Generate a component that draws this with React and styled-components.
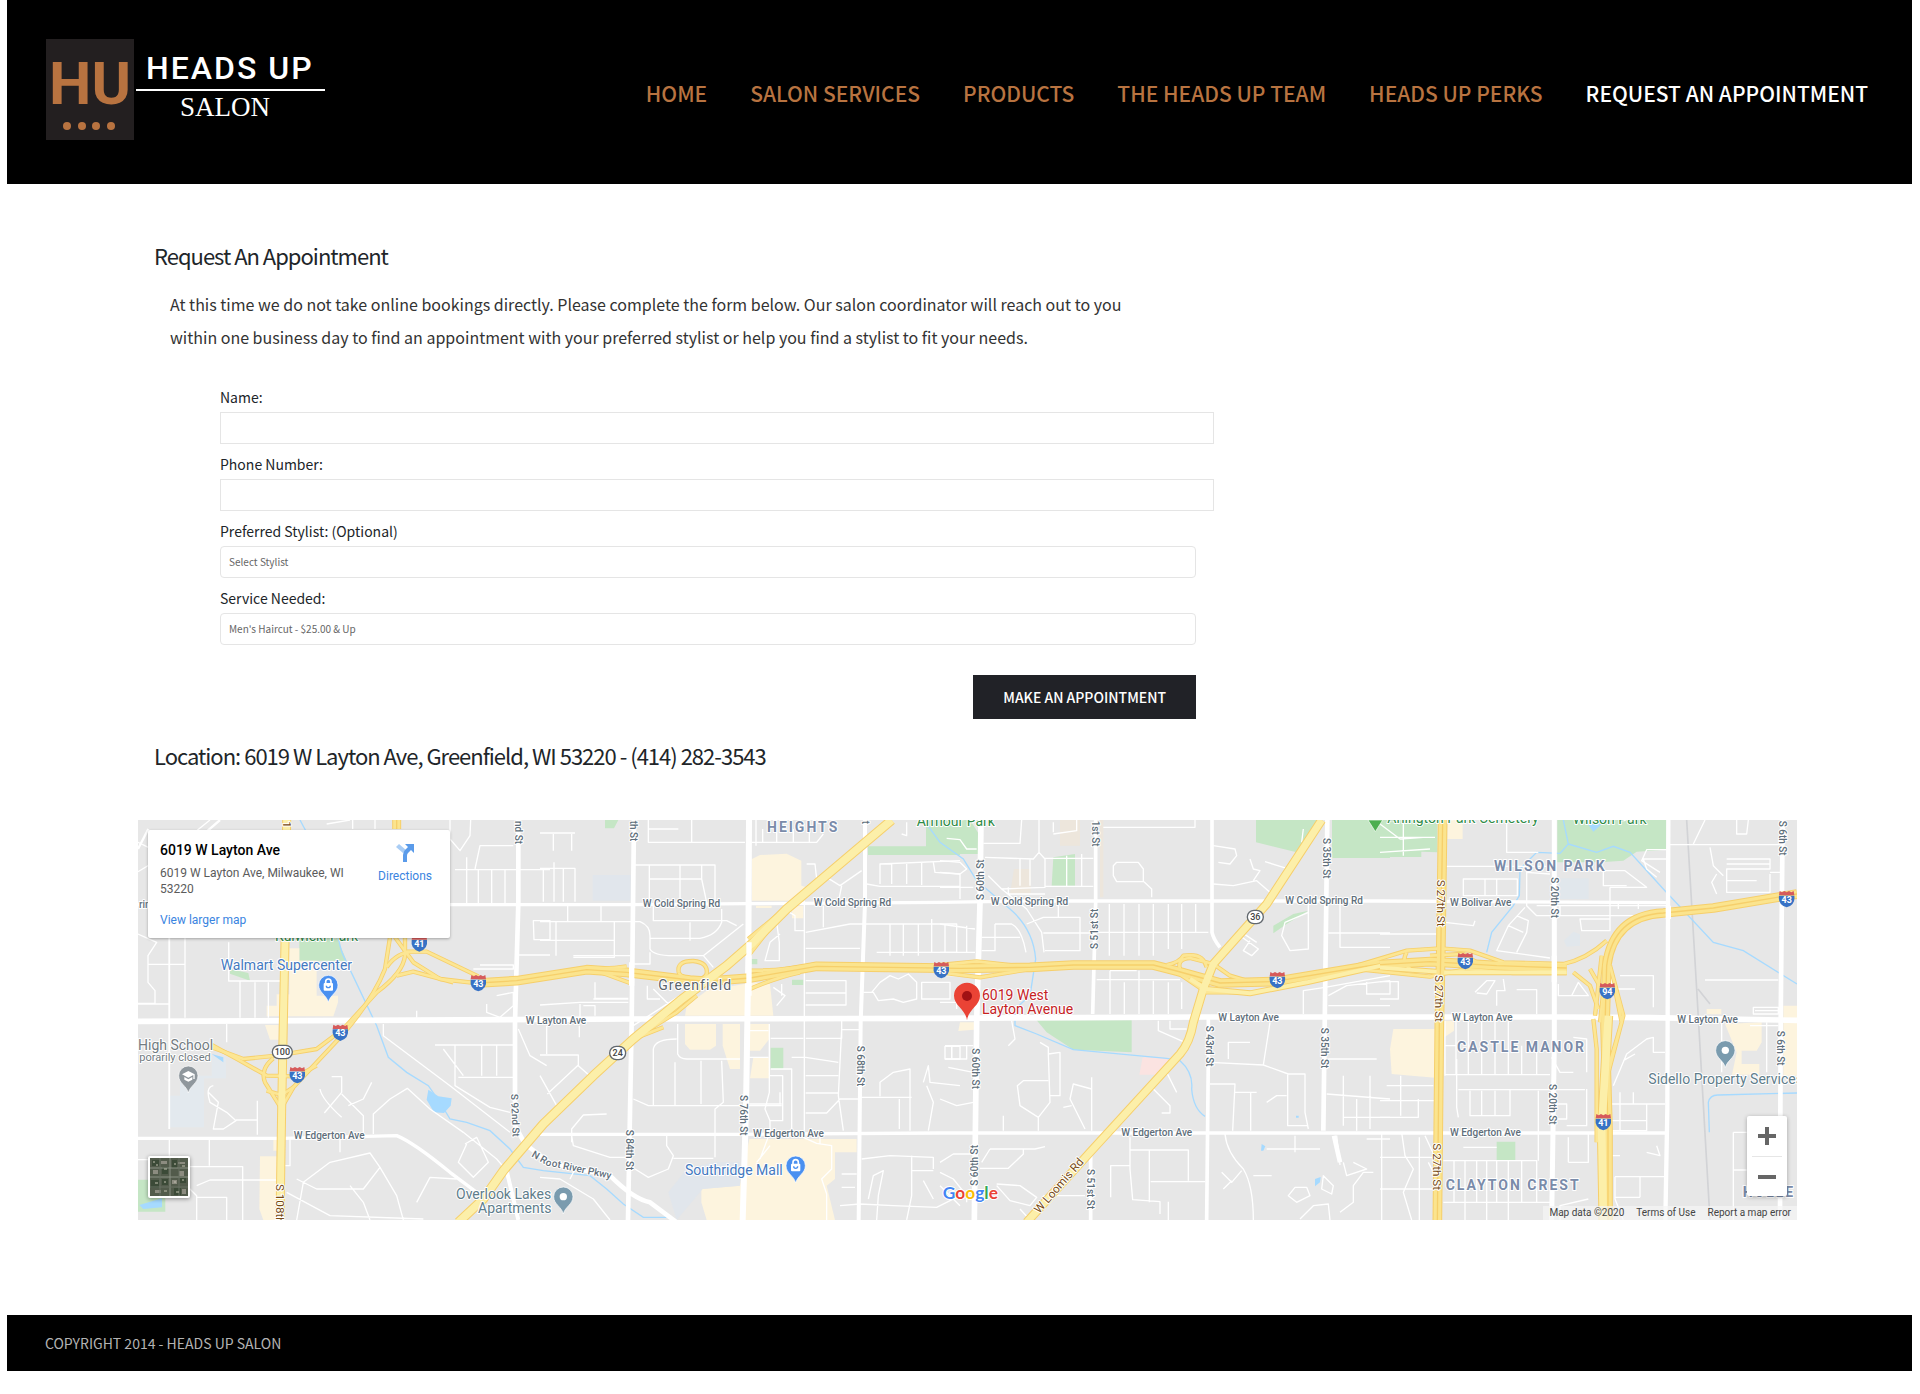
import React from 'react';
import styled, { createGlobalStyle } from 'styled-components';

const GlobalStyle = createGlobalStyle`
  * {
    box-sizing: border-box;
  }

  body {
    margin: 0;
    background: #fff;
    color: #212529;
    font-family: 'Noto Sans CJK SC', 'Noto Sans', sans-serif;
  }
`;

const Page = styled.div`
  padding: 0 8px 22px 7px;
`;

const HeaderBar = styled.header`
  display: flex;
  align-items: flex-start;
  justify-content: space-between;
  min-height: 184px;
  padding: 38px 44px 0 39px;
  background: #000;
`;

const LogoLink = styled.a`
  display: block;
  flex: none;

  svg {
    display: block;
  }
`;

const Nav = styled.nav`
  display: flex;
  flex-wrap: wrap;
  gap: 16px 43px;
  padding-top: 37px;
`;

const NavLink = styled.a`
  color: ${props => (props.$active ? '#fff' : '#b87340')};
  font-size: 21px;
  font-weight: 500;
  line-height: 36px;
  text-decoration: none;
`;

const Main = styled.main`
  padding: 53px 115px 95px 131px;
`;

const Section = styled.section`
  padding-left: 16px;
`;

const Heading = styled.h2`
  margin: 0;
  font-size: 22px;
  font-weight: 400;
  letter-spacing: -1px;
  line-height: 36px;
`;

const Intro = styled.p`
  max-width: 1000px;
  margin: 15px 0 32px;
  padding: 0 16px;
  color: #333;
  font-size: 16px;
  line-height: 33px;
`;

const Form = styled.form`
  display: flex;
  flex-direction: column;
  gap: 9px;
  max-width: 976px;
  margin: 0 0 18px 66px;
`;

const Field = styled.div`
  display: flex;
  flex-direction: column;
  gap: 4px;
`;

const Label = styled.label`
  font-size: 14px;
  line-height: 22px;
`;

const TextInput = styled.input`
  box-sizing: content-box;
  width: 100%;
  height: 30px;
  padding: 0 8px;
  border: 1px solid #e5e5e5;
  background: #fff;
  font: inherit;
  font-size: 14px;
`;

const Select = styled.select`
  width: 100%;
  height: 32px;
  padding: 0 8px 2px;
  appearance: none;
  border: 1px solid #e5e5e5;
  border-radius: 4px;
  background: #fff;
  color: #666;
  font-family: inherit;
  font-size: 10px;
`;

const SubmitButton = styled.button`
  align-self: flex-end;
  height: 44px;
  margin-top: 21px;
  padding: 0 30px;
  border: 0;
  background: #212227;
  color: #fff;
  font-family: inherit;
  font-size: 14px;
  font-weight: 500;
`;

const MapFrame = styled.div`
  position: relative;
  height: 400px;
  margin-top: 47px;
  overflow: hidden;
  background: #e7e7e7;
  font-family: Roboto, sans-serif;
`;

const MapCanvas = styled.svg`
  display: block;
  width: 100%;
  height: 100%;
`;

const PlaceCard = styled.div`
  position: absolute;
  top: 10px;
  left: 10px;
  display: flex;
  justify-content: space-between;
  width: 302px;
  height: 108px;
  padding: 11px 18px 9px 12px;
  border-radius: 2px;
  background: #fff;
  box-shadow: 0 1px 3px rgba(0, 0, 0, 0.3);
  color: #5b5b5b;
  font-size: 12px;
  line-height: 16px;
`;

const PlaceInfo = styled.div`
  width: 200px;
`;

const PlaceName = styled.div`
  margin-bottom: 6px;
  color: #000;
  font-size: 14px;
  font-weight: 500;
  line-height: 18px;
`;

const MapLink = styled.a`
  display: block;
  margin-top: ${props => props.$gap || 0}px;
  color: #3a84df;
  text-align: center;
  text-decoration: none;
`;

const LargerMap = styled(MapLink)`
  text-align: left;
`;

const DirectionsIcon = styled.svg`
  display: block;
  margin: 2px auto 5px;
`;

const SatelliteButton = styled.button`
  position: absolute;
  bottom: 22px;
  left: 10px;
  width: 42px;
  height: 42px;
  padding: 2px;
  border: 0;
  border-radius: 2px;
  background: #fff;
  box-shadow: 0 1px 4px rgba(0, 0, 0, 0.4);

  svg {
    display: block;
  }
`;

const ZoomPanel = styled.div`
  position: absolute;
  right: 10px;
  bottom: 24px;
  width: 40px;
  padding: 0 5px;
  border-radius: 2px;
  background: #fff;
  box-shadow: 0 1px 4px rgba(0, 0, 0, 0.3);
`;

const ZoomButton = styled.button`
  display: flex;
  align-items: center;
  justify-content: center;
  width: 30px;
  height: 40px;
  padding: 0;
  border: 0;
  background: none;

  & + & {
    border-top: 1px solid #e6e6e6;
  }
`;

const Attribution = styled.div`
  position: absolute;
  right: 0;
  bottom: 0;
  display: flex;
  gap: 12px;
  padding: 0 6px;
  background: rgba(245, 245, 245, 0.7);
  color: #444;
  font-size: 10px;
  line-height: 14px;

  a {
    color: inherit;
    text-decoration: none;
  }
`;

const FooterBar = styled.footer`
  padding: 15px 38px;
  background: #000;
  color: #b3b3b3;
  font-size: 14px;
  line-height: 26px;
`;

const navItems = [
  'HOME',
  'SALON SERVICES',
  'PRODUCTS',
  'THE HEADS UP TEAM',
  'HEADS UP PERKS',
  'REQUEST AN APPOINTMENT',
];

// Map geometry. One map pixel is three units, and the roads are grouped in
// four tiles that each start at their own x.
const tileX = [0, 1230, 2430, 3750];

const areas = [
  {
    tile: 0,
    shapes: [
      ['#c5e6c5', 'M508 385H620L650 455H508Z M300 480L355 492L360 515L300 494Z M24 1112H106V1208H24Z'],
      ['#fdf4de', 'M478 418H508V455H560V560H624V580L610 622H410V590H440V556H478Z M405 648H446V692H420Z M430 992H444V1025H430Z M390 1042H446V1233H400L388 1200Z'],
      ['#e3e9ee', 'M245 735L288 750V808H222V955H116V860H150V800H245Z'],
      ['#a6daff', 'M895 842L925 862L965 868L962 890L942 912L912 910L890 872Z M245 735L280 745V760Z M28 1188L96 1168V1195L40 1200Z'],
    ],
  },
  {
    tile: 1,
    shapes: [
      ['#c5e6c5', 'M195 33H235L222 58H195Z M984 112H1158V33H1260V138H984Z M692 716H730V780H692Z M756 512H790V528H756Z M634 450H652V466H634Z'],
      ['#fdf4de', 'M636 150L660 138L740 134L784 155V230L820 240L760 275H636Z M648 290H695V297H648Z M756 290H790V328H756Z M500 545L640 520L690 525L700 620H435L440 590Z M435 645H528V710L510 722H450L435 705Z M548 645H600V780H570L548 710Z M628 645H688V690L660 725H630Z M640 745H688V808H630Z M628 990H950V1030H885V1110L860 1130L885 1233H500L484 1180V1140L600 1130Z'],
      ['#e1e6ec', 'M158 198H272V275H158Z M385 1150L440 1080L520 1060L600 1060V1130L488 1140L410 1233Z'],
    ],
  },
  {
    tile: 2,
    shapes: [
      ['#c5e6c5', 'M0 33H90L120 80V135H0Z M340 145L405 135V230H335Z M290 634H575V730L400 722L320 670Z M948 33H1140L1070 130L948 100Z M1176 33H1350V147H1176Z M1000 350L1060 315L1105 305L1040 345L1000 373Z'],
      ['#fdf4de', 'M60 640H102V662L55 666Z'],
      ['#ede6dc', 'M360 33H420V110H360Z M222 180H272V255H210Z M480 33H490V265H480Z'],
      ['#fbe3e1', 'M608 745L690 748L660 797H598Z'],
      ['#a6daff', 'M965 1005L976 1012L970 1025H963Z M1125 1110L1142 1104L1140 1120L1125 1132Z M1068 920H1076V926H1068Z'],
    ],
  },
  {
    tile: 3,
    shapes: [
      ['#c5e6c5', 'M0 33H172V130L124 128V144H0Z M532 33H860V122L770 128L730 155L660 160H532Z M350 998H406V1054H350Z'],
      ['#fdf4de', 'M202 33H248V90H202Z M40 660H165V806L35 795L30 720Z M194 635H222V665L194 684Z M980 600H1024V616H980Z M1035 645L1145 640V700L1130 725H1085V765H1138V797H1056L1070 730Z M1210 590H1251V800H1210Z'],
      ['#e1e7ec', 'M536 208H626V270H536Z M552 395L580 368L600 376V410L560 413Z'],
      ['#a6daff', 'M614 33H680L640 68Z'],
    ],
  },
];

const minorRoads = [
  // tile 0
  'M118 290V960 M24 188L120 130L240 33 M24 100L55 115 M24 375L80 400L54 440V520L75 545V583H24 M54 466H165 M165 385V626 M24 585H118 M296 400V516H455 M330 516V626 M375 520V626 M415 520V626 M290 645V700 M24 1052H118 M118 985V1060L150 1110L200 1160V1233 M165 1073H338V1233 M200 1130L240 1113H450 M238 985V1070 M200 1165H290V1233 M250 830Q225 835 240 880L290 910L318 935L280 960H250L265 880L235 850 M318 933H382 M382 875V977 M605 803H635V850L583 912 M635 855L700 920V975 M570 840Q575 870 635 925 M725 820L700 870L655 890 M730 975V915L780 870L832 838L900 900L1000 970L1100 1050L1130 1085 M760 645V680L960 830L1140 970 M975 708V830L1080 895L1140 910 M915 708H1150 M985 805H1150 M1055 708V800 M1100 708V800 M940 720L1000 800 M1165 660L1200 740L1250 770 M1070 585V610L1110 625L1150 590V550L1100 560 M1050 468H1150V480H1030 M1165 438H1260 M1165 182H1260 M975 182H1165 M1045 182V285 M1085 182V285 M1125 182V285 M1010 145V285 M1165 182 M1210 335H1260V392H1212Z M1035 180L1050 110H1150 M960 33V90L990 125L1020 80L1022 33 M590 45L660 33 M668 33V60 M735 33V60 M630 990V1030 M500 1233L520 1120L600 1060L720 1032L750 1075L700 1140L560 1140L500 1110 M750 1075L800 1160L820 1233 M660 1130L700 1180L720 1233 M1010 1005L985 1060L1030 1105L1075 1060L1040 985L1005 1005 M860 1180L900 1105L980 1110 M470 1150L600 1220L880 1230 M480 985V1070H465 M860 605V626',
  // tile 1
  'M0 72H105 M40 75V125 M95 75V125 M0 178H105V278 M10 180V278 M42 160V278 M70 180V278 M325 33V100H615 M325 60H415 M455 33V100 M285 168H525V285 M328 170V278 M420 170V285 M328 210H485V168 M485 210L500 280 M0 338H300Q330 350 330 380V420Q340 440 400 440L490 440L610 345 M83 290V338 M183 290V338 M48 338V440 M223 340V445H100 M0 394H222 M330 388H480Q530 380 545 340V300 M450 340V395 M340 290V335H560L590 350 M100 440H270 M330 430V465H275 M490 440L520 475 M0 588L120 580H265 M120 585V626 M160 570H265 M165 520V568H265 M130 590H165V620 M322 530V570H360 M340 540L400 600 M280 650L420 560 M0 738H115V770L160 810 M22 855L115 768 M0 800L50 890 M20 650V735 M118 650V685 M340 890V720Q345 690 410 690 M413 645V735Q420 750 440 750H600 M405 890V760 M483 755V885 M545 755L550 880L525 900V1045 M280 870L325 890H725 M95 1000V960L130 918L200 915 M95 980L100 1010L210 1045H270 M380 975V1010L400 1040L385 1080L325 1105L285 1080 M400 1048H520 M648 33V110 M668 60V100H830L850 75 M710 33V98 M760 60V98 M808 60V98 M636 100H668 M1100 40V80L1085 75 M980 225L1020 232L1260 232 M1020 225V165L1260 155 M1055 165V225 M1100 160V225 M1145 160V228 M1180 160L1185 190L1260 195 M860 205L900 230L965 185 M800 165H825L830 210 M905 230L895 280 M793 275V965 M850 290V355 M797 370L930 345H1250V430H1010 M797 418H960 M1050 345V440 M1090 345V440 M1135 345V440 M1175 330V430 M1215 345V430 M710 340L718 400V455H675L690 400L720 375 M740 305L765 320V365H793 M797 515H918V588H797 M797 552H918 M700 535L735 560L710 590 M725 525V560 M1145 520H1230V570H1145Z M970 550H1000L1015 575L1060 570L1090 580L1130 570V520L1105 495L1075 510L1050 500L1020 520L995 550 M688 645V850L675 900L690 935H728V800H690 M692 688H790 M797 688H905V635 M905 662H957 M797 745L895 760 M797 800H895 M797 852H897 M797 912H860L900 870H957 M905 660L895 860L910 965 M755 745H797 M692 780H755V970 M628 665H685 M628 745H685 M628 885H725 M720 850V885 M690 935V970L660 1050 M1020 862V820L1060 790L1110 780V965 M960 865H1115 M1078 870V960 M1150 820L1165 770L1170 820L1260 830 M1160 830L1180 880L1165 965 M1215 712H1260V750H1215Z M1235 712V750 M650 1060L690 1010 M790 985L830 1003L875 1010V1080L845 1110L860 1155V1233 M840 985V1005 M965 1050L1050 1040L1180 1045V1080 M1180 1085H1115V1040 M985 1170L1000 1100L1030 1085L1015 1160L1010 1233 M1115 1085V1160L1100 1233 M900 1190L960 1185L1060 1190L1190 1195L1260 1160 M1150 1115L1180 1170 M905 1095H950 M905 1135H945 M0 1105L60 1110L160 1170L210 1233 M90 1110L105 1080',
  // tile 2
  'M130 103H240L245 33 M135 145L280 150L297 130L315 150V235L185 240L145 200 M297 130V33 M340 70V40 M340 75L410 65V33 M20 88L60 92L80 120H110 M0 155L60 160L80 180L60 195L0 190 M0 235H100 M60 195V270 M240 150V230 M270 150V230 M205 235V255H315 M315 148H460 M380 140V230 M425 135V230 M315 232H460 M185 240L260 300L305 370L312 430 M260 345L310 325H420V425H315 M355 275V325 M310 372H460 M465 370H805 M508 285V440 M552 285V440 M597 285V440 M640 285V440 M685 285V420 M725 285V420 M767 285V370 M490 55H765V33 M530 160H595L610 180V218H530L520 200V170Z M612 218L635 240V265 M165 345H215Q245 360 258 430 M125 385H240 M165 345V425H125 M0 345L105 360 M80 350V430 M0 430H105 M470 512H720 M510 485V615 M553 520V615 M597 485V615 M510 485H590 M640 515V615 M685 520V615 M725 520V600 M820 110L885 120L890 140L870 165L835 160 M820 225L880 230L950 215L990 250L975 275 M930 150L940 180L960 185L940 215 M975 158L1040 178 M1085 100L1090 60 M900 380L955 420L935 440L910 425L930 395 M905 370L950 400 M1105 285V420L1050 425L1025 380L1035 340L1105 310 M1165 372H1350 M1200 285V415H1350 M1090 615V545L1155 535L1350 500 M1165 560L1220 530L1350 515 M1165 590H1350 M1280 520V555H1350V515 M5 500H105 M0 580H50V600 M655 635V665L735 700L710 735 M690 635V660H740 M215 635L225 690L205 710 M15 710H100 M15 750H80V712 M35 712V750 M0 870L50 890L100 880 M25 775L100 790 M300 700L325 715V735L360 730V860H330 M325 735L330 880L295 925L240 890L232 830L250 815H325 M295 925V965 M455 805V965 M455 840L400 825L390 870L435 960 M370 895L395 890 M190 920V965 M640 840L690 890V912H665 M680 790L710 850 M810 760L970 768L1045 795H1095V910L1105 960 M970 768L990 640 M865 750V700H930 M810 825H885L878 965 M885 850H950 M932 850V965 M980 880L1010 860H1040 M1043 795V950H1105 M1160 855L1350 870 M1210 800V950 M1250 870V965 M1210 925H1350 M1290 800V960 M1165 750H1310 M1190 980L1200 1068 M855 975Q860 1030 910 1080Q940 1130 940 1233 M845 1090L875 1120L905 1085 M850 1140L875 1115 M940 1100H995 M570 985V1080L578 1172L660 1178V1215 M570 1023H745V1115 M628 1025V1180 M632 1118H795 M570 1070H512V1165 M685 1178V1233 M0 1090L40 1110L80 1160V1180 M0 1060L40 1035H100 M0 1130L60 1190 M120 1078H205L250 1035V1018 M150 1020H285L315 1013 M150 1020L125 1060 M170 1125L240 1130L290 1165L270 1190L210 1175L170 1130 M310 1160H435 M240 1200L270 1233 M1065 980V1030 M980 1020H1140 M1240 1060L1280 1080L1220 1100L1210 1060 M1150 1100L1180 1130L1175 1155L1145 1140Z M1065 1135H1100L1110 1160L1070 1180L1045 1160Z M1080 1230L1120 1190L1165 1185L1170 1233 M1200 1210L1240 1180V1130L1270 1090H1300 M1325 975V1233 M1280 990H1350',
  // tile 3
  'M0 85H165 M70 33V140 M0 45L60 90L130 85 M0 130L150 120 M195 172H530 M380 33V130H475 M250 210H412V260H250Z M315 210V260 M350 210V260 M440 185V290L470 320H860 M440 190L510 195 M470 290H860 M540 290V320 M600 330H690V365H605Z M690 235V365 M690 235H800L735 185H640 M670 185V230H740 M860 150H790L800 180L830 205 M860 122H800L785 155L840 190 M870 107H1200 M865 33 M990 115L1000 170L1030 200 M1040 150H1170V180H1040V250H1170V195 M1040 165H1170 M1040 215H1130 M1170 190H1200 M940 105L975 33 M1070 33V75H1100L1105 33 M1010 195L995 220L1010 255 M0 375H170 M195 340L280 350L285 335 M435 295L385 350L350 425L510 447 M410 320L445 335L440 370L410 430 M385 350L430 370 M0 518H55V570H0 M285 550L320 515H345L320 555L290 552 M370 510L375 545H350V590 M410 542H470V615 M535 525V560H625L595 520L575 560 M715 285V300 M720 500H820V595 M695 500V540H765 M975 513H1195 M195 635V800 M228 635V795 M265 635V795 M305 635V795 M345 635V795 M385 635V795 M425 710V795 M470 730V795 M195 710H230 M195 797H510 M230 750V895L235 925 M235 842H615 M270 845V920H390V842 M305 845V920 M345 845V920 M475 845V1055 M510 930H560V885H510 M0 875H165 M0 925H115V870 M62 800V920 M20 830H160 M0 1045H165L135 980 M65 970L75 1040L100 1080L70 1150L95 1233 M118 985V1233 M0 1140H165 M145 1060L165 1100 M190 1055H470V1180 M190 1180H510 M222 1055V1180 M255 1055V1233 M290 1055V1180 M320 1055V1233 M350 1055V1180 M385 1055V1233 M425 1055V1180 M250 1015H350 M690 885H855 M720 850V965 M760 850V885 M800 885V965H690 M690 935H800 M700 830L740 735L800 690L820 685V730H855 M730 755L765 735 M705 1103H855 M705 1103V1170L730 1233 M705 1165H780 M780 1105V1165 M720 1040H690 M800 1030L840 1040L830 1010 M565 1060H625V975 M565 985V1060 M540 1233V1190L625 1170 M515 745L540 790H580 M580 685L620 690V790 M1120 595V615H1195V595Z M1125 605H1195 M1110 650H1195 M1160 640V790 M1025 630V790 M1060 970H1100 M1060 970V1233 M1060 1083H1100 M775 280V300 M620 840V950H560',
];

const streets = [
  { w: 5, d: 'M118 290V960' },
  { w: 10, d: 'M24 287H1500L1850 284L2430 280L2700 276H3750L4620 281' },
  {
    w: 10,
    d: 'M24 988H460L800 980Q850 1000 960 1090L1040 1150 M1230 976H1830L2430 972H3700L4605 972',
  },
  { w: 17, d: 'M24 637L700 634L1500 630L2430 628L3230 624H4300L4560 626L5001 634' },
  { w: 14, d: 'M1165 33V280L1155 640V950L1185 1005L1260 1062L1440 1100Q1510 1170 1560 1180L1640 1240' },
  { w: 12, d: 'M1130 1085L1165 1233' },
  { w: 14, d: 'M1512 33L1505 640L1494 1233' },
  { w: 18, d: 'M1857 33L1855 450L1848 900L1838 1233' },
  { w: 12, d: 'M2205 33V280L2192 640L2186 1233' },
  { w: 17, d: 'M2553 33L2550 280L2540 640L2533 1233' },
  { w: 11, d: 'M2897 33V280L2888 615 M2882 1025V1233' },
  { w: 11, d: 'M3246 33V370Q3250 390 3270 415 M3235 620V740L3230 1233' },
  { w: 14, d: 'M3592 33L3586 500L3580 965 M3612 980L3630 1060' },
  { w: 15, d: 'M4273 33V700L4265 1233' },
  { w: 13, d: 'M4615 33L4612 900L4606 1233' },
  { w: 14, d: 'M4958 33L4952 640L4950 1233' },
  { w: 7, d: 'M24 120L55 60 M130 130L210 85L270 33' },
];

const rivers =
  'M510 33Q540 90 600 200Q620 400 640 440L740 650L775 745L830 790L895 830L930 880L960 930L1010 940L1080 965L1140 1020L1180 1075L1240 1085L1380 1100L1430 1140L1480 1185L1540 1225H1610 ' +
  'M2390 45L2430 100L2500 150L2540 215L2640 300Q2710 360 2717 450L2700 560L2655 600V650L2720 675L2830 722L3110 748L3150 755Q3190 790 3185 840Q3190 900 3225 922 ' +
  'M4070 430L4085 370L4150 290L4168 260L4170 180L4220 130L4290 133L4315 105L4300 33 M4315 105L4400 130L4450 112L4500 130L4600 240L4750 400L4840 425L5001 525 M4738 970L4735 880Q4740 857 4765 858L5001 852';

const ramps = [
  'M780 385L765 480Q730 570 635 680L490 835L450 905',
  'M825 385V440Q820 490 740 550L640 660L560 720L440 740L340 750L245 715',
  'M245 708L330 755L410 800L500 802L560 770',
  'M795 385L850 460L930 510L1045 523',
  'M850 428Q800 430 770 475 M830 428H890L1045 502',
  'M800 500L850 488L970 520',
  'M430 748Q390 780 405 820L455 900 M490 835L455 858L410 845',
  'M1370 475Q1430 482 1490 472 M1400 485L1500 522',
  'M1646 490Q1640 455 1690 456Q1735 460 1730 495Q1720 515 1690 510Q1650 505 1646 490',
  'M1860 485Q1960 485 2060 465 M1860 540Q1940 505 2010 490',
  'M1855 390L1940 320 M1855 440L1910 370 M1600 655L1510 690L1640 610L1700 560',
  'M2430 468L2540 457L2700 475 M2430 490L2550 505L2690 482',
  'M3110 468Q3150 460 3160 440Q3220 430 3230 475 M3150 480Q3140 450 3180 447L3250 465L3300 500L3350 515',
  'M3130 482L3230 550L3350 550',
  'M3680 470L3830 425L3930 418L4020 425L4120 460L4300 465Q4370 450 4430 395',
  'M3680 480L3900 503L4010 480L4150 492H4310',
  'M3830 430Q3810 465 3850 485',
  'M3900 440L4000 435L4040 460',
  'M4330 490L4380 530L4405 600 M4380 480L4420 550L4410 640',
  'M4390 630L4400 720V1000 M4415 440L4395 620 M4440 470L4480 620L4425 830V970 M4455 540L4475 640L4440 760',
];

const highways = [
  { w: 24, lanes: true, d: 'M1045 522L1160 515L1370 482L1490 490L1680 513L1730 517L1860 507L2060 472L2490 478L2700 475L2830 468H3070L3140 486L3270 522L3430 518L3750 465' },
  { w: 13, d: 'M3180 510L3230 540L3360 553L3530 520L3780 464' },
  { w: 24, lanes: true, d: 'M3750 467L3900 458L4100 470L4310 477' },
  { w: 12, d: 'M3750 476L3950 490H4310' },
  { w: 24, lanes: true, d: 'M4434 1233V960L4425 650L4430 470Q4450 320 4600 312L4750 297L5001 255' },
  { w: 24, d: 'M4420 1233L4415 960L4435 620' },
  { w: 22, lanes: true, d: 'M800 33V60' },
  { w: 22, d: 'M470 33L465 400L460 640L455 900L450 1233' },
  { w: 24, d: 'M985 1240L1060 1170L1120 1085L1240 945L1390 800L1510 690L1650 575L1790 470L1870 400L1970 300L2285 33' },
  { w: 22, d: 'M2690 1240L2880 1030L3150 735Q3180 700 3190 640L3220 540L3250 465L3410 285L3575 33' },
  { w: 24, lanes: true, d: 'M3938 33L3932 450L3928 640L3922 1240' },
];

const streetLabels = [
  [1538, 293, 'W Cold Spring Rd'],
  [2051, 290, 'W Cold Spring Rd'],
  [2582, 288, 'W Cold Spring Rd'],
  [3466, 285, 'W Cold Spring Rd'],
  [3960, 290, 'W Bolivar Ave'],
  [1187, 645, 'W Layton Ave'],
  [3265, 635, 'W Layton Ave'],
  [3966, 637, 'W Layton Ave'],
  [4642, 642, 'W Layton Ave'],
  [491, 991, 'W Edgerton Ave'],
  [1869, 984, 'W Edgerton Ave'],
  [2974, 981, 'W Edgerton Ave'],
  [3960, 981, 'W Edgerton Ave'],
  [27, 298, 'rin'],
];

const verticalLabels = [
  [1154, 36, 'nd St', 90],
  [1143, 855, 'S 92nd St', 88],
  [1500, 35, 'th St', 90],
  [1488, 962, 'S 84th St', 90],
  [1829, 858, 'S 76th St', 90],
  [2180, 710, 'S 68th St', 90],
  [2196, 35, 't', 90],
  [2527, 718, 'S 60th St', 90],
  [2563, 273, 'S 60th St', -90],
  [2544, 1130, 'S 60th St', -90],
  [2887, 35, '1st St', 90],
  [2903, 420, 'S 51st St', -90],
  [2872, 1080, 'S 51st St', 90],
  [3227, 650, 'S 43rd St', 90],
  [3580, 87, 'S 35th St', 90],
  [3573, 656, 'S 35th St', 90],
  [4262, 205, 'S 20th St', 90],
  [4256, 825, 'S 20th St', 90],
  [4948, 35, 'S 6th St', 90],
  [4940, 665, 'S 6th St', 90],
];

const arterialLabels = [
  [438, 1125, 'S 108th', 90],
  [460, 37, '1', 90],
  [3920, 212, 'S 27th St', 90],
  [3916, 498, 'S 27th St', 90],
  [3909, 1003, 'S 27th St', 90],
  [2728, 1215, 'W Loomis Rd', -49],
];

const shields = [
  [868, 403, '41'],
  [1045, 522, '43'],
  [631, 671, '43'],
  [502, 798, '43'],
  [2434, 483, '43'],
  [3442, 513, '43'],
  [4006, 456, '43'],
  [4432, 546, '94'],
  [4420, 939, '41'],
  [4970, 270, '43'],
];

const Shield = ({ x, y, children }) => (
  <g transform={`translate(${x} ${y})`}>
    <path
      d="M-21 -24L-14 -20L-7 -24L0 -20L7 -24L14 -20L21 -24L23 -11H-23Z"
      fill="#d65b5b"
    />
    <path d="M-23 -10H23Q27 17 0 25Q-27 17 -23 -10Z" fill="#3872c5" />
    <text y="11" fill="#fff" fontSize="27" fontWeight="700" textAnchor="middle">
      {children}
    </text>
  </g>
);

const RouteBadge = ({ x, y, width, children }) => (
  <g transform={`translate(${x} ${y})`}>
    <rect
      x={-width / 2}
      y="-20"
      width={width}
      height="40"
      rx="20"
      fill="#fff"
      stroke="#62686e"
      strokeWidth="4"
    />
    <text y="10" fill="#444" fontSize="27" fontWeight="500" textAnchor="middle">
      {children}
    </text>
  </g>
);

const PlacePin = ({ x, y, color, kind }) => (
  <g transform={`translate(${x} ${y})`}>
    <path
      d="M0 0C-5 -22 -29 -29 -29 -52A29 29 0 0 1 29 -52C29 -29 5 -22 0 0Z"
      fill={color}
      stroke="#fff"
      strokeWidth="2"
    />
    {kind === 'shop' && (
      <g>
        <rect x="-14" y="-58" width="28" height="23" rx="3" fill="#fff" />
        <path d="M-8 -57V-62A8 8 0 0 1 8 -62V-57" fill="none" stroke="#fff" strokeWidth="5" />
        <path d="M-6 -50A6 6 0 0 0 6 -50" fill="none" stroke={color} strokeWidth="4" />
      </g>
    )}
    {kind === 'school' && (
      <path d="M-19 -56L0 -66L19 -56V-42H15V-54L0 -46Z M-12 -48L0 -41L12 -48V-40L0 -34L-12 -40Z" fill="#fff" />
    )}
    {kind === 'dot' && <circle cy="-52" r="11" fill="#fff" />}
  </g>
);

const RotatedLabel = ({ label: [x, y, text, angle] }) => (
  <text transform={`translate(${x} ${y}) rotate(${angle})`}>{text}</text>
);

const StreetMap = () => (
  <MapCanvas
    viewBox="24 33 4977 1200"
    preserveAspectRatio="xMidYMid slice"
    role="img"
    aria-label="Map of 6019 West Layton Avenue"
  >
    <rect x="24" y="33" width="4977" height="1200" fill="#e7e7e7" />
    {areas.map(({ tile, shapes }) => (
      <g key={tile} transform={`translate(${tileX[tile]} 0)`}>
        {shapes.map(([fill, d]) => (
          <path key={d} d={d} fill={fill} />
        ))}
      </g>
    ))}
    <path d="M4670 33L4700 540L4740 1233 M4704 540L4740 585" fill="none" stroke="#d2d3d6" strokeWidth="5" />
    <path d={rivers} fill="none" stroke="#a6daff" strokeWidth="4" />
    {minorRoads.map((d, i) => (
      <path
        key={tileX[i]}
        d={d}
        transform={`translate(${tileX[i]} 0)`}
        fill="none"
        stroke="#fff"
        strokeWidth="4"
        strokeLinejoin="round"
      />
    ))}
    {streets.map(({ w, d }) => (
      <path key={d} d={d} fill="none" stroke="#fff" strokeWidth={w} strokeLinejoin="round" />
    ))}
    <g fill="none" strokeLinejoin="round">
      {ramps.map(d => (
        <path key={d} d={d} stroke="#f6cf6b" strokeWidth="13" />
      ))}
      {highways.map(({ w, d }) => (
        <path key={d} d={d} stroke="#f6cf6b" strokeWidth={w + 5} />
      ))}
      {ramps.map(d => (
        <path key={d} d={d} stroke="#fce694" strokeWidth="8" />
      ))}
      {highways.map(({ w, d, lanes }) => (
        <g key={d}>
          <path d={d} stroke={lanes ? '#fbe48e' : '#fcefa9'} strokeWidth={w - 1} />
          {lanes && <path d={d} stroke="#f6cf6b" strokeWidth="4" />}
        </g>
      ))}
    </g>
    <path d="M1857 400V560 M4273 440V520 M1505 460V530 M4615 290V330" stroke="#fff" strokeWidth="16" />

    <g stroke="#fff" strokeWidth="6" strokeLinejoin="round" paintOrder="stroke">
      <g fill="#5f6f7b" fontSize="30" fontWeight="500">
        {streetLabels.map(([x, y, text]) => (
          <text key={`${x}-${y}`} x={x} y={y}>
            {text}
          </text>
        ))}
        {verticalLabels.map(label => (
          <RotatedLabel key={label.join()} label={label} />
        ))}
        <text transform="translate(1203 1042) rotate(30)">N Ro</text>
        <text transform="translate(1264 1072) rotate(12)">ot River Pkwy</text>
      </g>
      <g fill="#774a12" fontSize="35">
        {arterialLabels.map(label => (
          <RotatedLabel key={label.join()} label={label} />
        ))}
      </g>
      <g fill="#7a8ba9" fontSize="42" fontWeight="700" letterSpacing="6">
        <text x="1911" y="69">HEIGHTS</text>
        <text x="4092" y="186">WILSON PARK</text>
        <text x="3981" y="729">CASTLE MANOR</text>
        <text x="3947" y="1143">CLAYTON CREST</text>
        <text x="4838" y="1165">HOLLE</text>
      </g>
      <g fontSize="42">
        <text x="1585" y="543" fill="#5b646b" letterSpacing="3">Greenfield</text>
        <text x="272" y="483" fill="#4479bf">Walmart Supercenter</text>
        <text x="1665" y="1098" fill="#4479bf">Southridge Mall</text>
        <text x="435" y="396" fill="#2f8b48">Kulwicki Park</text>
        <text x="2360" y="51" fill="#2f8b48">Armour Park</text>
        <text x="3772" y="43" fill="#2f8b48">Arlington Park Cemetery</text>
        <text x="4328" y="45" fill="#2f8b48">Wilson Park</text>
        <g fill="#607d8b">
          <text x="978" y="1171">Overlook Lakes</text>
          <text x="1044" y="1213">Apartments</text>
          <text x="4555" y="825">Sidello Property Services</text>
        </g>
        <g fill="#727b81">
          <text x="24" y="723">High School</text>
          <text x="28" y="755" fontSize="33">porarily closed</text>
        </g>
        <g fill="#c5221f">
          <text x="2556" y="573">6019 West</text>
          <text x="2556" y="615">Layton Avenue</text>
        </g>
      </g>
      <text x="2438" y="1171" fontFamily="Lato, sans-serif" fontSize="52" fontWeight="700">
        <tspan fill="#4285f4">G</tspan>
        <tspan fill="#ea4335">o</tspan>
        <tspan fill="#fbbc05">o</tspan>
        <tspan fill="#4285f4">g</tspan>
        <tspan fill="#34a853">l</tspan>
        <tspan fill="#ea4335">e</tspan>
      </text>
    </g>

    {shields.map(([x, y, text]) => (
      <Shield key={`${x}-${y}`} x={x} y={y}>
        {text}
      </Shield>
    ))}
    <RouteBadge x={457} y={729} width={60}>100</RouteBadge>
    <RouteBadge x={1463} y={732} width={48}>24</RouteBadge>
    <RouteBadge x={3376} y={324} width={48}>36</RouteBadge>
    <PlacePin x={595} y={580} color="#4a90f0" kind="shop" />
    <PlacePin x={1997} y={1122} color="#4a90f0" kind="shop" />
    <PlacePin x={175} y={852} color="#8f979d" kind="school" />
    <PlacePin x={1300} y={1215} color="#7a9bae" kind="dot" />
    <PlacePin x={4786} y={776} color="#7a9bae" kind="dot" />
    <path d="M3714 33H3758L3736 68Z" fill="#4caf50" stroke="#fff" strokeWidth="2" />
    <path
      d="M2511 634C2507 600 2472 590 2472 560A39 39 0 0 1 2550 560C2550 590 2515 600 2511 634Z"
      fill="#ea4335"
    />
    <circle cx="2511" cy="561" r="15" fill="#a11114" />
  </MapCanvas>
);

const Satellite = () => (
  <svg width="38" height="38" viewBox="0 0 38 38" aria-hidden="true">
    <rect width="38" height="38" fill="#525b4b" />
    <path d="M2 2h7v6H2zM12 9h6v7h-6zM1 22h8v8H1zM12 21h6v6h-6zM22 2h5v8h-5zM30 20h6v5h-6zM24 30h7v7h-7z" fill="#3b4a37" />
    <path d="M11 3h6v3h-6zM3 12h5v4H3zM29 13h5v5h-5zM22 22h5v4h-5zM5 32h6v3H5zM32 31h4v5h-4zM28 4h7v2h-7z" fill="#8c8c80" />
    <path d="M0 10H38M0 19H38M20 0V38" fill="none" stroke="#8a9285" />
    <path d="M0 29H38M10 0V38M29 0V38" fill="none" stroke="#667062" />
    <path d="M3 4h2M6 7h2M14 11h3M24 6h2M32 8h3M5 25h3M14 24h2M24 24h2M32 22h2M14 33h3M26 34h3" fill="none" stroke="#c0bfae" />
  </svg>
);

const Logo = () => (
  <svg width="282" height="102" viewBox="0 0 282 102" role="img" aria-label="Heads Up Salon">
    <rect x="0" y="1" width="88" height="101" fill="#231f20" />
    <g fontFamily="Roboto, sans-serif" fontWeight="700">
      <text x="44" y="66" fill="#b87340" fontSize="60" textAnchor="middle">
        HU
      </text>
      <text x="100" y="41" fill="#fff" fontSize="32" fontWeight="500" letterSpacing="2">
        HEADS UP
      </text>
    </g>
    <g fill="#b87340">
      <circle cx="21" cy="88" r="4" />
      <circle cx="36" cy="88" r="4" />
      <circle cx="50" cy="88" r="4" />
      <circle cx="65" cy="88" r="4" />
    </g>
    <rect x="90" y="51" width="189" height="2" fill="#fff" />
    <text x="134" y="78" fill="#fff" fontFamily="'Liberation Serif', serif" fontSize="27">
      SALON
    </text>
  </svg>
);

const AppointmentForm = () => (
  <Form onSubmit={e => e.preventDefault()}>
    <Field>
      <Label htmlFor="name">Name:</Label>
      <TextInput id="name" type="text" />
    </Field>
    <Field>
      <Label htmlFor="phone">Phone Number:</Label>
      <TextInput id="phone" type="tel" />
    </Field>
    <Field>
      <Label htmlFor="stylist">Preferred Stylist: (Optional)</Label>
      <Select id="stylist">
        <option>Select Stylist</option>
      </Select>
    </Field>
    <Field>
      <Label htmlFor="service">Service Needed:</Label>
      <Select id="service">
        <option>Men's Haircut - $25.00 &amp; Up</option>
      </Select>
    </Field>
    <SubmitButton type="submit">MAKE AN APPOINTMENT</SubmitButton>
  </Form>
);

const LocationMap = () => (
  <MapFrame>
    <StreetMap />
    <PlaceCard>
      <PlaceInfo>
        <PlaceName>6019 W Layton Ave</PlaceName>
        6019 W Layton Ave, Milwaukee, WI 53220
        <LargerMap href="#map" $gap={15}>
          View larger map
        </LargerMap>
      </PlaceInfo>
      <div>
        <MapLink href="#directions">
          <DirectionsIcon width="20" height="20" viewBox="0 0 20 20" aria-hidden="true">
            <path d="M1 4L4 1L11 7L8 10Z" fill="#a9cdf5" />
            <path d="M8 19V12Q8 9 10 7L13 4L10 1H19V10L16 7L13 10Q12 11 12 13V19Z" fill="#5a9bea" />
          </DirectionsIcon>
          Directions
        </MapLink>
      </div>
    </PlaceCard>
    <SatelliteButton type="button" aria-label="Show satellite imagery">
      <Satellite />
    </SatelliteButton>
    <ZoomPanel>
      <ZoomButton type="button" aria-label="Zoom in">
        <svg width="18" height="18" viewBox="0 0 18 18" aria-hidden="true">
          <path d="M0 9H18M9 0V18" stroke="#666" strokeWidth="4" />
        </svg>
      </ZoomButton>
      <ZoomButton type="button" aria-label="Zoom out">
        <svg width="18" height="18" viewBox="0 0 18 18" aria-hidden="true">
          <path d="M0 9H18" stroke="#666" strokeWidth="4" />
        </svg>
      </ZoomButton>
    </ZoomPanel>
    <Attribution>
      <span>Map data ©2020</span>
      <a href="#terms">Terms of Use</a>
      <a href="#report">Report a map error</a>
    </Attribution>
  </MapFrame>
);

const App = () => (
  <Page>
    <GlobalStyle />
    <HeaderBar>
      <LogoLink href="#home">
        <Logo />
      </LogoLink>
      <Nav>
        {navItems.map(item => (
          <NavLink key={item} href="#" $active={item === 'REQUEST AN APPOINTMENT'}>
            {item}
          </NavLink>
        ))}
      </Nav>
    </HeaderBar>
    <Main>
      <Section>
        <Heading>Request An Appointment</Heading>
        <Intro>
          At this time we do not take online bookings directly. Please complete the form below. Our
          salon coordinator will reach out to you within one business day to find an appointment
          with your preferred stylist or help you find a stylist to fit your needs.
        </Intro>
        <AppointmentForm />
        <Heading>Location: 6019 W Layton Ave, Greenfield, WI 53220 - (414) 282-3543</Heading>
      </Section>
      <LocationMap />
    </Main>
    <FooterBar>COPYRIGHT 2014 - HEADS UP SALON</FooterBar>
  </Page>
);

export default App;
